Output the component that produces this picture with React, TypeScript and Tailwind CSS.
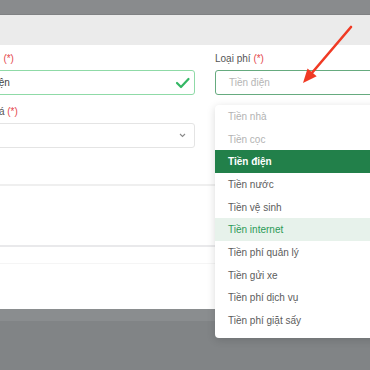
import React from "react";

const items: { label: string; kind: "disabled" | "normal" | "selected" | "hover" }[] = [
  { label: "Tiền nhà", kind: "disabled" },
  { label: "Tiền cọc", kind: "disabled" },
  { label: "Tiền điện", kind: "selected" },
  { label: "Tiền nước", kind: "normal" },
  { label: "Tiền vệ sinh", kind: "normal" },
  { label: "Tiền internet", kind: "hover" },
  { label: "Tiền phí quản lý", kind: "normal" },
  { label: "Tiền gửi xe", kind: "normal" },
  { label: "Tiền phí dịch vụ", kind: "normal" },
  { label: "Tiền phí giặt sấy", kind: "normal" },
];

function itemClass(kind: string) {
  switch (kind) {
    case "disabled":
      return "text-[#b3b3b3]";
    case "selected":
      return "bg-[#22804a] text-white font-semibold";
    case "hover":
      return "bg-[#e7f2eb] text-[#2b9a57]";
    default:
      return "text-[#5c5c5c]";
  }
}

export default function App() {
  return (
    <div
      className="relative w-[370px] h-[370px] overflow-hidden bg-[#818486]"
      style={{ fontFamily: '"Liberation Sans", Arial, sans-serif' }}
    >
      <div className="h-[14px] bg-[#898b8d]" />
      <div className="h-[1px] bg-[#7f8183]" />
      <div className="h-[294px] bg-white flex flex-col">
        <div className="h-[30px] bg-[#ebebeb] shrink-0" />
        <div className="flex ml-[-45px] gap-[20px] pt-[7px]">
          <div className="w-[240px] shrink-0 flex flex-col">
            <div className="h-[14px] leading-[14px] text-[10px] text-[#555] ml-[-3px]">
              Khoản phí <span className="text-[#e5484d] ml-[3px]">(*)</span>
            </div>
            <div className="mt-[4px] h-[25px] border border-[#8fdaa7] rounded-[3px] flex items-center pl-[13px] pr-[3px] text-[10px] text-[#444]">
              <span className="flex-1">Tiền điện</span>
              <svg width="16" height="12" viewBox="0 0 16 12">
                <polyline points="2,6 6,10 13.5,2" fill="none" stroke="#34b764" strokeWidth="2.2" strokeLinecap="round" strokeLinejoin="round" />
              </svg>
            </div>
            <div className="mt-[10px] h-[14px] leading-[14px] text-[10px] text-[#555] pl-[4px]">
              Đơn vị giá <span className="text-[#e5484d]">(*)</span>
            </div>
            <div className="mt-[4px] h-[25px] border border-[#e4e4e4] rounded-[3px] flex items-center justify-end pr-[8px]">
              <svg width="7" height="5" viewBox="0 0 7 5">
                <polyline points="1,1 3.5,3.5 6,1" fill="none" stroke="#8a8a8a" strokeWidth="1.1" />
              </svg>
            </div>
          </div>
          <div className="w-[200px] shrink-0 flex flex-col">
            <div className="h-[14px] leading-[14px] text-[10px] text-[#555]">
              Loại phí <span className="text-[#e5484d]">(*)</span>
            </div>
            <div className="mt-[4px] h-[25px] border border-[#66ab7f] rounded-[3px] flex items-center pl-[13px] text-[10px] text-[#b5b5b5]">
              Tiền điện
            </div>
          </div>
        </div>
        <div className="mt-[36px] h-[2px] bg-[#efefef]" />
        <div className="h-[59px]" />
        <div className="h-[2px] bg-[#e9e9eb]" />
        <div className="h-[16px]" />
        <div className="h-[1px] bg-[#f5f5f5]" />
      </div>
      <div className="h-[12px] bg-[#8a8d8f]" />

      <div className="absolute left-[215px] top-[105px] w-[200px] bg-white rounded-[4px] shadow-[0_2px_8px_rgba(0,0,0,0.15)] pb-[6px]">
        {items.map((it) => (
          <div
            key={it.label}
            className={`h-[22.7px] flex items-center pl-[13px] text-[10px] ${itemClass(it.kind)}`}
          >
            {it.label}
          </div>
        ))}
      </div>

      <svg className="absolute left-0 top-0" width="370" height="370" viewBox="0 0 370 370">
        <line x1="351" y1="27" x2="311" y2="74" stroke="#f03a24" strokeWidth="2.6" strokeLinecap="round" />
        <polygon points="303,83 307.5,68.5 316.7,76.3" fill="#f03a24" />
      </svg>
    </div>
  );
}
